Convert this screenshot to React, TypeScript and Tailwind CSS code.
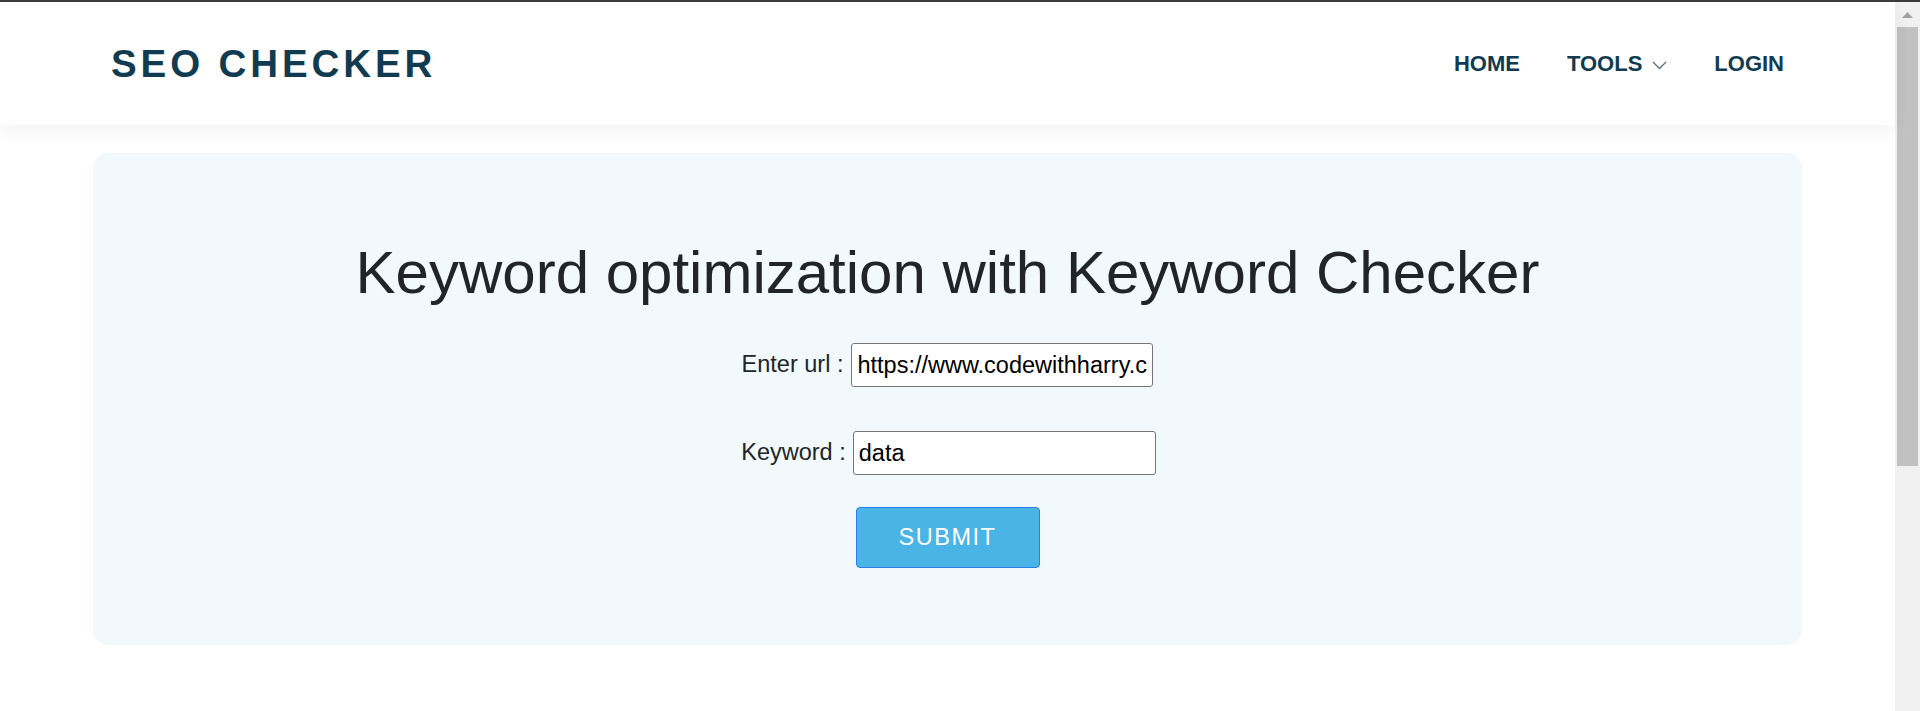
export default function App() {
  return (
    <div className="h-[711px] w-full flex flex-col bg-white overflow-hidden font-['Liberation_Sans',Arial,sans-serif]">
      {/* window top edge */}
      <div className="h-[2px] bg-[#3c3c3c] shrink-0" />

      <div className="flex flex-1 min-h-0">
        <div className="flex-1 min-w-0">
          {/* Header */}
          <header className="h-[123px] bg-white shadow-[0_6px_18px_rgba(0,0,0,0.05)] relative">
            <div className="w-[1709px] mx-auto h-full pl-[18px] pr-[18px] flex items-center justify-between">
              <a className="text-[38.5px] font-bold tracking-[3.9px] text-[#113b51] leading-none pt-[2px]">
                SEO CHECKER
              </a>
              <nav className="flex items-center gap-[47px] text-[22px] font-bold text-[#113b51]">
                <a>HOME</a>
                <a className="flex items-center gap-[10px]">
                  TOOLS
                  <svg width="15" height="9" viewBox="0 0 15 9" fill="none" className="mt-[3px]">
                    <polyline points="1,1 7.5,7.5 14,1" stroke="#5b6f7c" strokeWidth="1.3" />
                  </svg>
                </a>
                <a>LOGIN</a>
              </nav>
            </div>
          </header>

          {/* Main card */}
          <main className="w-[1709px] mx-auto mt-[28px] bg-[#f2f9fd] rounded-[15px] pt-[84px] pb-[77px] flex flex-col items-center text-[#212529]">
            <h1 className="text-[60px] leading-[72px] font-normal mb-[34px]">
              Keyword optimization with Keyword Checker
            </h1>
            <div className="flex items-center gap-[8px] text-[23.5px]">
              <label>Enter url :</label>
              <input
                className="w-[302px] h-[44px] border border-[#767676] rounded-[3px] bg-white px-[5px] text-black outline-none"
                defaultValue="https://www.codewithharry.com"
              />
            </div>
            <div className="flex items-center gap-[7px] text-[23.5px] mt-[44px] ml-[2px]">
              <label>Keyword :</label>
              <input
                className="w-[303px] h-[44px] border border-[#767676] rounded-[3px] bg-white px-[5px] text-black outline-none"
                defaultValue="data"
              />
            </div>
            <button className="mt-[32px] w-[184px] h-[61px] bg-[#4ab4e6] border border-[#2a7fe0] rounded-[4px] text-white text-[23.5px] tracking-[1.5px]">
              SUBMIT
            </button>
          </main>
        </div>

        {/* Scrollbar */}
        <div className="w-[25px] shrink-0 bg-[#f1f1f1] flex flex-col items-center">
          <div className="h-[25px] flex items-center justify-center">
            <svg width="11" height="6" viewBox="0 0 11 6">
              <polygon points="5.5,0 11,6 0,6" fill="#a3a3a3" />
            </svg>
          </div>
          <div className="w-[21px] h-[439px] bg-[#c1c1c1]" />
        </div>
      </div>
    </div>
  );
}
